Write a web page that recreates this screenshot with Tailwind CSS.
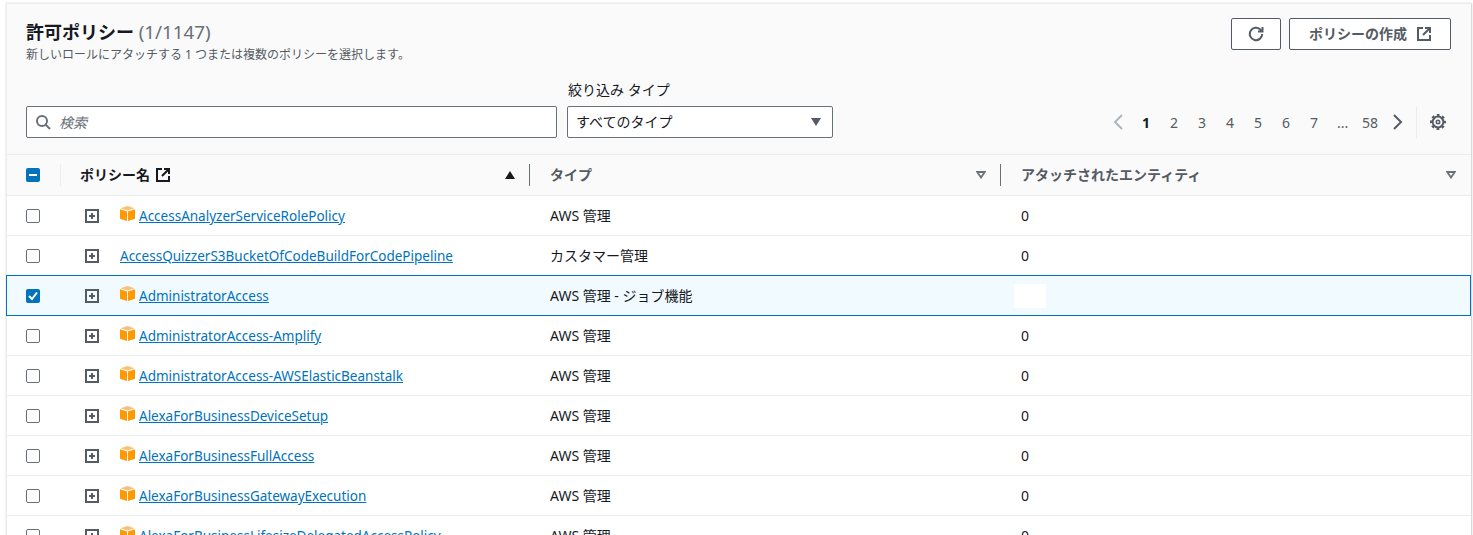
<!doctype html>
<html lang="ja">
<head>
<meta charset="UTF-8" />
<title>許可ポリシー</title>
<script src="https://cdn.jsdelivr.net/npm/@tailwindcss/browser@4"></script>
</head>
<body class="bg-white h-[535px] overflow-hidden font-['Noto_Sans','Noto_Sans_CJK_JP',sans-serif] text-[14px] text-[#16191f]">
<div class="pt-[3px] pl-[6px] pr-[1px]">
	<div class="border-l border-r border-t border-[#eaeded] border-r-[#d5dbdb] bg-white shadow-[0_0_2px_rgba(0,0,0,0.15)]">
		<!-- header -->
		<div class="bg-[#fafafa] h-[151px] border-b border-[#eaeded] pl-[19px] pr-[20px] flex flex-col">
			<div class="flex justify-between items-start pt-[14px]">
				<div class="pt-[2px]">
					<h2 class="text-[18px] leading-[24px] font-bold">許可ポリシー <span class="font-normal text-[18.8px] text-[#687078]">(1/1147)</span></h2>
					<p class="text-[12px] leading-[14px] mt-[4px] text-[#545b64]">新しいロールにアタッチする 1 つまたは複数のポリシーを選択します。</p>
				</div>
				<div class="flex gap-[8px]">
					<button class="w-[50px] h-[32px] border border-[#545b64] rounded-[2px] bg-white flex items-center justify-center">
						<svg class="w-[16px] h-[16px]" viewBox="0 0 16 16" fill="none" stroke="#545b64" stroke-width="2"><path d="M14.200 8a6.200 6.200 0 1 1-2-4.600L14 5" /><path d="M14.500 1v4.500H10" /></svg>
					</button>
					<button class="w-[162px] h-[32px] border border-[#545b64] rounded-[2px] bg-white flex items-center justify-center gap-[10px] font-bold text-[#545b64] text-[14px] pb-[2px]">
						ポリシーの作成
						<svg class="w-[14px] h-[14px] mt-[2px]" viewBox="0 0 14 14" fill="none" stroke="#545b64" stroke-width="2"><path d="M6 1H1v12h12V8" /><path d="M8 1h5v5M13 1 6 8" /></svg>
					</button>
				</div>
			</div>
			<div class="flex items-end mt-auto pb-[16px]">
				<div class="w-[531px] h-[32px] border border-[#687078] rounded-[2px] bg-white flex items-center pl-[8px] gap-[8px]">
					<svg class="w-[16px] h-[16px]" viewBox="0 0 16 16" fill="none" stroke="#687078" stroke-width="2"><circle cx="7" cy="7" r="5" /><path d="M10.500 10.500 15 15" /></svg>
					<span class="italic text-[#687078] text-[14px]">検索</span>
				</div>
				<div class="ml-[10px]">
					<div class="text-[14px] leading-[16px] mb-[8px] pl-[1px]">絞り込み タイプ</div>
					<div class="w-[266px] h-[32px] border border-[#687078] rounded-[2px] bg-white flex items-center justify-between pl-[8px] pr-[11px]">
						<span class="text-[14px] pb-[2px]">すべてのタイプ</span>
						<svg class="w-[10px] h-[8px]" viewBox="0 0 10 8"><path d="M0 0h10L5 8z" fill="#545b64" /></svg>
					</div>
				</div>
				<div class="ml-auto flex items-center h-[32px] text-[14px] text-[#545b64] mr-[5px]">
					<svg class="w-[10px] h-[16px] mr-[18px]" viewBox="0 0 10 16" fill="none" stroke="#aab7b8" stroke-width="2"><path d="M9 1 2 8l7 7" /></svg>
					<span class="w-[10px] text-center font-bold text-[#16191f]">1</span>
					<span class="w-[10px] text-center ml-[18px]">2</span>
					<span class="w-[10px] text-center ml-[18px]">3</span>
					<span class="w-[10px] text-center ml-[18px]">4</span>
					<span class="w-[10px] text-center ml-[18px]">5</span>
					<span class="w-[10px] text-center ml-[18px]">6</span>
					<span class="w-[10px] text-center ml-[18px]">7</span>
					<span class="w-[10px] text-center ml-[18px]">...</span>
					<span class="w-[16px] text-center ml-[15px]">58</span>
					<svg class="w-[10px] h-[16px] ml-[15px]" viewBox="0 0 10 16" fill="none" stroke="#545b64" stroke-width="2"><path d="m1 1 7 7-7 7" /></svg>
					<div class="w-px h-[32px] bg-[#eaeded] ml-[13px] mr-[13px]"></div>
					<svg class="w-[16px] h-[16px]" viewBox="0 0 16 16" fill="none" stroke="#545b64"><circle cx="8" cy="8" r="5.400" stroke-width="2" /><circle cx="8" cy="8" r="6.800" stroke-width="2.400" stroke-dasharray="2.670 2.670" stroke-dashoffset="1.300" /><circle cx="8" cy="8" r="1.700" stroke-width="1.600" /></svg>
				</div>
			</div>
		</div>
		<!-- table head -->
		<div class="grid grid-cols-[53px_470px_471px_1fr] h-[41px] bg-[#fafafa] border-b border-[#eaeded] font-bold text-[14px] text-[#545b64]">
			<div class="flex items-center pl-[19px]">
				<span class="w-[14px] h-[14px] rounded-[2px] bg-[#0073bb] flex items-center justify-center"><span class="w-[8px] h-[2px] bg-white"></span></span>
			</div>
			<div class="flex items-center pl-[20px] pr-[13px] text-[#16191f] relative">
				<span class="absolute left-0 top-[9px] h-[22px] w-px bg-[#eaeded]"></span>
				<span class="pb-[2px]">ポリシー名</span>
				<svg class="w-[14px] h-[14px] ml-[6px]" viewBox="0 0 14 14" fill="none" stroke="#16191f" stroke-width="2"><path d="M6 1H1v12h12V8" /><path d="M8 1h5v5M13 1 6 8" /></svg>
				<svg class="w-[10px] h-[8px] ml-auto mr-[2px]" viewBox="0 0 10 8"><path d="M0 8h10L5 0z" fill="#16191f" /></svg>
				<span class="absolute right-0 top-[9px] h-[22px] w-px bg-[#687078]"></span>
			</div>
			<div class="flex items-center pl-[20px] pr-[15px] relative">
				<span class="pb-[2px]">タイプ</span>
				<svg class="w-[10px] h-[8px] ml-auto" viewBox="0 0 10 8" fill="none" stroke="#687078" stroke-width="1.800"><path d="M1.200 1h7.600L5 6.500z" /></svg>
				<span class="absolute right-0 top-[9px] h-[22px] w-px bg-[#687078]"></span>
			</div>
			<div class="flex items-center pl-[20px] pr-[15px]">
				<span class="pb-[2px]">アタッチされたエンティティ</span>
				<svg class="w-[10px] h-[8px] ml-auto" viewBox="0 0 10 8" fill="none" stroke="#687078" stroke-width="1.800"><path d="M1.200 1h7.600L5 6.500z" /></svg>
			</div>
		</div>
		<!-- rows -->
		<div class="grid grid-cols-[53px_470px_471px_1fr] h-[40px] border-b border-[#eaeded] items-center">
			<div class="pl-[19px]"><span class="block w-[14px] h-[14px] rounded-[2px] border border-[#687078] bg-white"></span></div>
			<div class="flex items-center pl-[25px]">
				<svg class="w-[14px] h-[14px]" viewBox="0 0 14 14" fill="none" stroke="#545b64" stroke-width="2"><rect x="1" y="1" width="12" height="12" /><path d="M4 7h6M7 4v6" /></svg>
				<svg class="w-[15px] h-[15px] ml-[21px] mr-[4px] -mt-[4px]" viewBox="0 0 15 15"><path d="M7.500 0 14.500 2.300 7.500 4.600 .5 2.300z" fill="#fbbf77" /><path d="M0 3.200 7 5.600V15L0 12.800z" fill="#ff9900" /><path d="M15 3.200 8 5.600V15l7-2.200z" fill="#ff9900" /></svg>
				<a class="text-[#0073bb] underline text-[13.5px] mt-[1px]">AccessAnalyzerServiceRolePolicy</a>
			</div>
			<div class="pl-[20px]">AWS 管理</div>
			<div class="pl-[20px]">0</div>
		</div>
		<div class="grid grid-cols-[53px_470px_471px_1fr] h-[40px] border-b border-[#eaeded] items-center">
			<div class="pl-[19px]"><span class="block w-[14px] h-[14px] rounded-[2px] border border-[#687078] bg-white"></span></div>
			<div class="flex items-center pl-[25px]">
				<svg class="w-[14px] h-[14px] mr-[21px]" viewBox="0 0 14 14" fill="none" stroke="#545b64" stroke-width="2"><rect x="1" y="1" width="12" height="12" /><path d="M4 7h6M7 4v6" /></svg>
				<a class="text-[#0073bb] underline text-[13.5px] mt-[1px]">AccessQuizzerS3BucketOfCodeBuildForCodePipeline</a>
			</div>
			<div class="pl-[20px]">カスタマー管理</div>
			<div class="pl-[20px]">0</div>
		</div>
		<div class="grid grid-cols-[53px_470px_471px_1fr] h-[41px] -mt-px border border-[#0073bb] bg-[#f1faff] -ml-px items-center relative">
			<div class="pl-[19px]"><span class="w-[14px] h-[14px] rounded-[2px] bg-[#0073bb] flex items-center justify-center"><svg class="w-[10px] h-[10px]" viewBox="0 0 10 10" fill="none" stroke="#fff" stroke-width="2"><path d="m1 5 3 3 5-6.500" /></svg></span></div>
			<div class="flex items-center pl-[25px]">
				<svg class="w-[14px] h-[14px]" viewBox="0 0 14 14" fill="none" stroke="#545b64" stroke-width="2"><rect x="1" y="1" width="12" height="12" /><path d="M4 7h6M7 4v6" /></svg>
				<svg class="w-[15px] h-[15px] ml-[21px] mr-[4px] -mt-[4px]" viewBox="0 0 15 15"><path d="M7.500 0 14.500 2.300 7.500 4.600 .5 2.300z" fill="#fbbf77" /><path d="M0 3.200 7 5.600V15L0 12.800z" fill="#ff9900" /><path d="M15 3.200 8 5.600V15l7-2.200z" fill="#ff9900" /></svg>
				<a class="text-[#0073bb] underline text-[13.5px] mt-[1px]">AdministratorAccess</a>
			</div>
			<div class="pl-[20px]">AWS 管理 - ジョブ機能</div>
			<div class="pl-[13px]"><span class="block w-[32px] h-[24px] bg-white"></span></div>
		</div>
		<div class="grid grid-cols-[53px_470px_471px_1fr] h-[40px] border-b border-[#eaeded] items-center">
			<div class="pl-[19px]"><span class="block w-[14px] h-[14px] rounded-[2px] border border-[#687078] bg-white"></span></div>
			<div class="flex items-center pl-[25px]">
				<svg class="w-[14px] h-[14px]" viewBox="0 0 14 14" fill="none" stroke="#545b64" stroke-width="2"><rect x="1" y="1" width="12" height="12" /><path d="M4 7h6M7 4v6" /></svg>
				<svg class="w-[15px] h-[15px] ml-[21px] mr-[4px] -mt-[4px]" viewBox="0 0 15 15"><path d="M7.500 0 14.500 2.300 7.500 4.600 .5 2.300z" fill="#fbbf77" /><path d="M0 3.200 7 5.600V15L0 12.800z" fill="#ff9900" /><path d="M15 3.200 8 5.600V15l7-2.200z" fill="#ff9900" /></svg>
				<a class="text-[#0073bb] underline text-[13.5px] mt-[1px]">AdministratorAccess-Amplify</a>
			</div>
			<div class="pl-[20px]">AWS 管理</div>
			<div class="pl-[20px]">0</div>
		</div>
		<div class="grid grid-cols-[53px_470px_471px_1fr] h-[40px] border-b border-[#eaeded] items-center">
			<div class="pl-[19px]"><span class="block w-[14px] h-[14px] rounded-[2px] border border-[#687078] bg-white"></span></div>
			<div class="flex items-center pl-[25px]">
				<svg class="w-[14px] h-[14px]" viewBox="0 0 14 14" fill="none" stroke="#545b64" stroke-width="2"><rect x="1" y="1" width="12" height="12" /><path d="M4 7h6M7 4v6" /></svg>
				<svg class="w-[15px] h-[15px] ml-[21px] mr-[4px] -mt-[4px]" viewBox="0 0 15 15"><path d="M7.500 0 14.500 2.300 7.500 4.600 .5 2.300z" fill="#fbbf77" /><path d="M0 3.200 7 5.600V15L0 12.800z" fill="#ff9900" /><path d="M15 3.200 8 5.600V15l7-2.200z" fill="#ff9900" /></svg>
				<a class="text-[#0073bb] underline text-[13.5px] mt-[1px]">AdministratorAccess-AWSElasticBeanstalk</a>
			</div>
			<div class="pl-[20px]">AWS 管理</div>
			<div class="pl-[20px]">0</div>
		</div>
		<div class="grid grid-cols-[53px_470px_471px_1fr] h-[40px] border-b border-[#eaeded] items-center">
			<div class="pl-[19px]"><span class="block w-[14px] h-[14px] rounded-[2px] border border-[#687078] bg-white"></span></div>
			<div class="flex items-center pl-[25px]">
				<svg class="w-[14px] h-[14px]" viewBox="0 0 14 14" fill="none" stroke="#545b64" stroke-width="2"><rect x="1" y="1" width="12" height="12" /><path d="M4 7h6M7 4v6" /></svg>
				<svg class="w-[15px] h-[15px] ml-[21px] mr-[4px] -mt-[4px]" viewBox="0 0 15 15"><path d="M7.500 0 14.500 2.300 7.500 4.600 .5 2.300z" fill="#fbbf77" /><path d="M0 3.200 7 5.600V15L0 12.800z" fill="#ff9900" /><path d="M15 3.200 8 5.600V15l7-2.200z" fill="#ff9900" /></svg>
				<a class="text-[#0073bb] underline text-[13.5px] mt-[1px]">AlexaForBusinessDeviceSetup</a>
			</div>
			<div class="pl-[20px]">AWS 管理</div>
			<div class="pl-[20px]">0</div>
		</div>
		<div class="grid grid-cols-[53px_470px_471px_1fr] h-[40px] border-b border-[#eaeded] items-center">
			<div class="pl-[19px]"><span class="block w-[14px] h-[14px] rounded-[2px] border border-[#687078] bg-white"></span></div>
			<div class="flex items-center pl-[25px]">
				<svg class="w-[14px] h-[14px]" viewBox="0 0 14 14" fill="none" stroke="#545b64" stroke-width="2"><rect x="1" y="1" width="12" height="12" /><path d="M4 7h6M7 4v6" /></svg>
				<svg class="w-[15px] h-[15px] ml-[21px] mr-[4px] -mt-[4px]" viewBox="0 0 15 15"><path d="M7.500 0 14.500 2.300 7.500 4.600 .5 2.300z" fill="#fbbf77" /><path d="M0 3.200 7 5.600V15L0 12.800z" fill="#ff9900" /><path d="M15 3.200 8 5.600V15l7-2.200z" fill="#ff9900" /></svg>
				<a class="text-[#0073bb] underline text-[13.5px] mt-[1px]">AlexaForBusinessFullAccess</a>
			</div>
			<div class="pl-[20px]">AWS 管理</div>
			<div class="pl-[20px]">0</div>
		</div>
		<div class="grid grid-cols-[53px_470px_471px_1fr] h-[40px] border-b border-[#eaeded] items-center">
			<div class="pl-[19px]"><span class="block w-[14px] h-[14px] rounded-[2px] border border-[#687078] bg-white"></span></div>
			<div class="flex items-center pl-[25px]">
				<svg class="w-[14px] h-[14px]" viewBox="0 0 14 14" fill="none" stroke="#545b64" stroke-width="2"><rect x="1" y="1" width="12" height="12" /><path d="M4 7h6M7 4v6" /></svg>
				<svg class="w-[15px] h-[15px] ml-[21px] mr-[4px] -mt-[4px]" viewBox="0 0 15 15"><path d="M7.500 0 14.500 2.300 7.500 4.600 .5 2.300z" fill="#fbbf77" /><path d="M0 3.200 7 5.600V15L0 12.800z" fill="#ff9900" /><path d="M15 3.200 8 5.600V15l7-2.200z" fill="#ff9900" /></svg>
				<a class="text-[#0073bb] underline text-[13.5px] mt-[1px]">AlexaForBusinessGatewayExecution</a>
			</div>
			<div class="pl-[20px]">AWS 管理</div>
			<div class="pl-[20px]">0</div>
		</div>
		<div class="grid grid-cols-[53px_470px_471px_1fr] h-[40px] border-b border-[#eaeded] items-center">
			<div class="pl-[19px]"><span class="block w-[14px] h-[14px] rounded-[2px] border border-[#687078] bg-white"></span></div>
			<div class="flex items-center pl-[25px]">
				<svg class="w-[14px] h-[14px]" viewBox="0 0 14 14" fill="none" stroke="#545b64" stroke-width="2"><rect x="1" y="1" width="12" height="12" /><path d="M4 7h6M7 4v6" /></svg>
				<svg class="w-[15px] h-[15px] ml-[21px] mr-[4px] -mt-[4px]" viewBox="0 0 15 15"><path d="M7.500 0 14.500 2.300 7.500 4.600 .5 2.300z" fill="#fbbf77" /><path d="M0 3.200 7 5.600V15L0 12.800z" fill="#ff9900" /><path d="M15 3.200 8 5.600V15l7-2.200z" fill="#ff9900" /></svg>
				<a class="text-[#0073bb] underline text-[13.5px] mt-[1px]">AlexaForBusinessLifesizeDelegatedAccessPolicy</a>
			</div>
			<div class="pl-[20px]">AWS 管理</div>
			<div class="pl-[20px]">0</div>
		</div>
	</div>
</div>
</body>
</html>
